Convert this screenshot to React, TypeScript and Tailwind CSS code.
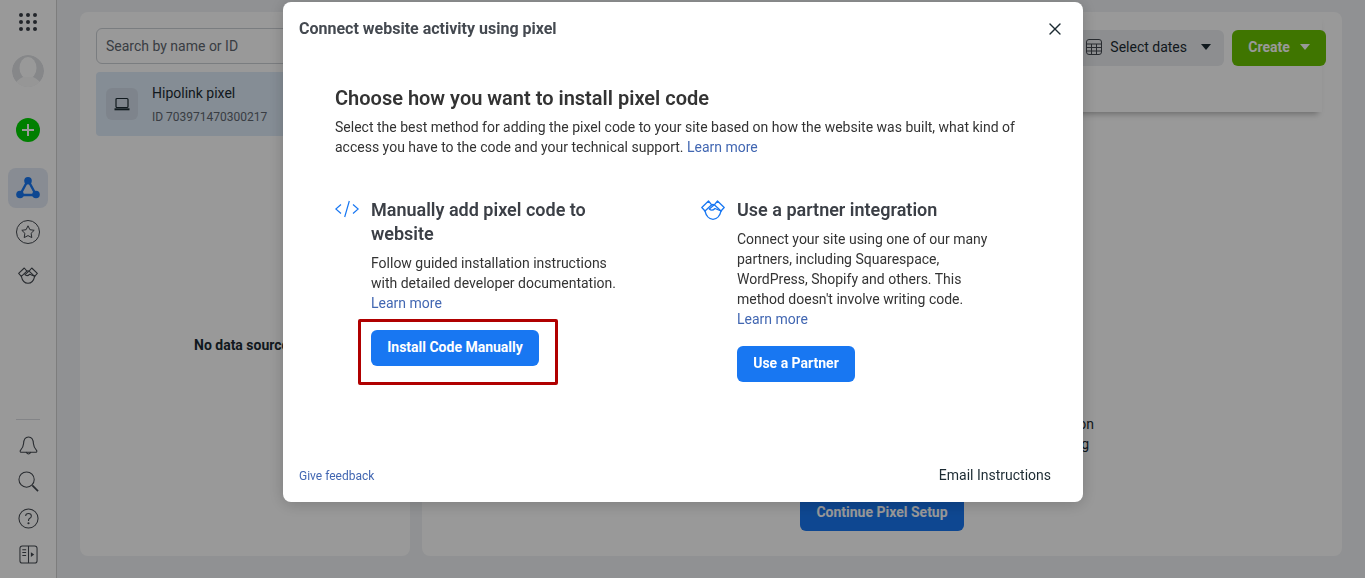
import { X } from "lucide-react";

function Handshake({ className }: { className: string }) {
    return (
        <svg viewBox="0 0 24 20" fill="none" stroke="currentColor" strokeWidth="1.3" strokeLinejoin="round" strokeLinecap="round" className={className}>
            <path d="M7.5 1 L0.8 7.5 L4 11 L10.7 4.8 Z" />
            <path d="M16.5 1 L23.2 7.5 L20 11 L13.3 4.8 Z" />
            <path d="M4 11 C5 15.5 8 19.3 12 19.3 C16 19.3 19 15.5 20 11" />
            <path d="M10.7 4.8 Q12 3.8 13.3 4.8 L8.3 9 Q11 11.5 14 8.5 L20 11" />
        </svg>
    );
}

function Sidebar() {
    return (
        <div className="w-[57px] shrink-0 bg-white border-r border-[#d0d0d0] flex flex-col items-center pt-[13px] pb-[14px] text-[#444950]">
            <div className="grid grid-cols-3 gap-[3px] w-[18px]">
                {Array.from({ length: 9 }).map((_, i) => (
                    <div key={i} className="w-1 h-1 rounded-full bg-[#3a3f47]" />
                ))}
            </div>
            <svg viewBox="0 0 32 32" className="w-8 h-8 mt-[24px] rounded-full">
                <circle cx="16" cy="16" r="16" fill="#dfe1e5" />
                <ellipse cx="16" cy="13" rx="8.5" ry="11" fill="#ffffff" />
                <path d="M2 32 Q5 24 11 22 L21 22 Q27 24 30 32 Z" fill="#fbfbfb" />
            </svg>
            <div className="w-6 h-6 mt-[31px] rounded-full bg-[#00d400] flex items-center justify-center">
                <svg viewBox="0 0 14 14" className="w-[14px] h-[14px]">
                    <path d="M7 1 V13 M1 7 H13" stroke="#fff" strokeWidth="2" />
                </svg>
            </div>
            <div className="w-10 h-10 mt-[26px] rounded-lg bg-[#e3eaf5] flex items-center justify-center">
                <svg viewBox="0 0 24 24" className="w-6 h-6" fill="#1877f2" stroke="#1877f2">
                    <path d="M12 4 L4 19 H20 Z" fill="none" strokeWidth="2.4" />
                    <circle cx="12" cy="4.8" r="3.8" stroke="none" />
                    <circle cx="4" cy="18.5" r="3.8" stroke="none" />
                    <circle cx="20" cy="18.5" r="3.8" stroke="none" />
                </svg>
            </div>
            <svg viewBox="0 0 24 24" className="w-6 h-6 mt-3" fill="none" stroke="currentColor" strokeWidth="1" strokeLinejoin="round">
                <circle cx="12" cy="12" r="11.5" />
                <path d="M12 5.8 L13.9 9.7 L18.2 10.3 L15.1 13.3 L15.8 17.6 L12 15.6 L8.2 17.6 L8.9 13.3 L5.8 10.3 L10.1 9.7 Z" />
            </svg>
            <Handshake className="w-5 h-[17px] mt-[23px]" />

            <div className="mt-auto w-6 border-t border-[#dadde1]" />
            <svg viewBox="0 0 20 22" className="w-[19px] h-[21px] mt-[15px]" fill="none" stroke="currentColor" strokeWidth="1.1" strokeLinejoin="round">
                <path d="M10 2 C6 2 5 5 4.8 9 C4.6 13 2.5 15 1.2 16.5 Q1 18 2.5 18 H17.5 Q19 18 18.8 16.5 C17.5 15 15.4 13 15.2 9 C15 5 14 2 10 2 Z" />
                <path d="M7.5 18 Q10 22 12.5 18" />
            </svg>
            <svg viewBox="0 0 22 22" className="w-[21px] h-[21px] mt-[15px]" fill="none" stroke="currentColor" strokeWidth="1.1">
                <circle cx="9" cy="9" r="8" />
                <path d="M15 15 L21 21" strokeWidth="1.8" />
            </svg>
            <svg viewBox="0 0 22 22" className="w-[21px] h-[21px] mt-[16px]" fill="none" stroke="currentColor" strokeWidth="1.1">
                <circle cx="11" cy="11" r="10" />
                <path d="M8 8.5 Q8 5.8 11 5.8 Q14 5.8 14 8.3 Q14 10 12 11 Q11 11.6 11 13.5" />
                <circle cx="11" cy="16" r="0.6" fill="currentColor" />
            </svg>
            <svg viewBox="0 0 20 20" className="w-[19px] h-[19px] mt-[16px]" fill="none" stroke="currentColor" strokeWidth="1.1">
                <rect x="1" y="1" width="18" height="18" rx="2.5" />
                <path d="M10 1 V19 M3.5 5 H7.5 M3.5 8 H7.5 M3.5 11 H7.5" />
                <path d="M12.5 7.5 L16 10 L12.5 12.5 Z" fill="currentColor" stroke="none" />
            </svg>
        </div>
    );
}

function LeftCard() {
    return (
        <div className="w-[330px] shrink-0 bg-white rounded-lg px-4 pt-4">
            <div className="h-9 border border-[#ccd0d5] rounded-md flex items-center px-[9px] text-sm text-[#606770]">Search by name or ID</div>
            <div className="h-16 mt-2 bg-[#deebf8] rounded flex items-center px-[10px]">
                <div className="w-8 h-8 rounded-md bg-[#d3dde9] flex items-center justify-center">
                    <svg viewBox="0 0 16 14" className="w-4 h-[14px]" fill="none" stroke="#1c2b33">
                        <rect x="2" y="1.5" width="12" height="9" rx="1" strokeWidth="1.2" />
                        <path d="M0.5 12.3 H15.5" strokeWidth="2" />
                    </svg>
                </div>
                <div className="ml-[14px] pb-px">
                    <div className="text-sm leading-5 text-[#1c2b33]">Hipolink pixel</div>
                    <div className="text-xs leading-4 mt-[6px] text-[#606770]">ID 703971470300217</div>
                </div>
            </div>
            <div className="mt-[199px] pl-[98px] text-sm font-bold text-[#1c2b33] whitespace-nowrap">No data sources</div>
        </div>
    );
}

function RightCard() {
    return (
        <div className="flex-1 bg-white rounded-lg flex flex-col overflow-hidden">
            <div className="h-[100px] mr-5 shadow-[0_6px_6px_-4px_rgba(0,0,0,0.3)] flex items-start justify-end gap-2 pt-[18px]">
                <div className="h-9 rounded-md bg-[#ebedf0] flex items-center pl-[14px] pr-[13px] pb-[2px] text-sm text-[#1c2b33]">
                    <svg viewBox="0 0 16 16" className="w-4 h-4 mr-2" fill="none" stroke="#444950" strokeWidth="1">
                        <rect x="0.5" y="0.5" width="15" height="15" rx="2.5" />
                        <path d="M0.5 5 H15.5 M0.5 8.5 H15.5 M0.5 12 H15.5 M5.5 5 V15.5 M10.5 5 V15.5" />
                    </svg>
                    Select dates
                    <div className="ml-[14px] w-0 h-0 border-x-[5px] border-x-transparent border-t-[6px] border-t-[#1c2b33]" />
                </div>
                <div className="h-9 w-[94px] mr-[-4px] rounded-md bg-[#69c400] flex items-center justify-center pb-[2px] text-sm font-bold text-white">
                    Create
                    <div className="ml-[10px] w-0 h-0 border-x-[5px] border-x-transparent border-t-[6px] border-t-white" />
                </div>
            </div>
            <div className="mt-auto flex flex-col items-center pb-[25px]">
                <div className="w-[424px] text-sm leading-5 text-[#1c2b33] text-right whitespace-nowrap flex flex-col items-end">
                    <div>Measure the actions people take on your website and add conversion</div>
                    <div className="pr-[5px]">events so you can improve your reporting and targeting</div>
                </div>
                <div className="mt-[41px] h-9 w-[164px] rounded-md bg-[#1877f2] text-white text-sm font-bold flex items-center justify-center pb-[2px]">Continue Pixel Setup</div>
            </div>
        </div>
    );
}

function InstallModal() {
    return (
        <div className="fixed inset-0 bg-black/40">
            <div className="absolute left-[283px] top-[2px] w-[800px] h-[500px] bg-white rounded-lg shadow-[0_2px_16px_rgba(0,0,0,0.2)] flex flex-col text-[#1c2b33]">
                <div className="flex items-center justify-between pl-4 pr-5 pt-[10px] h-[52px]">
                    <div className="text-base leading-5 font-bold text-[#444950] -mt-2">Connect website activity using pixel</div>
                    <X className="w-5 h-5 text-[#1c2b33] -mt-2 -mr-[2px]" strokeWidth={1.6} />
                </div>
                <div className="pl-[52px] pr-[60px] pt-[32px] flex-1">
                    <h2 className="text-xl leading-6 font-semibold text-[#333]">Choose how you want to install pixel code</h2>
                    <p className="text-sm leading-5 mt-[7px] text-[#333]">
                        Select the best method for adding the pixel code to your site based on how the website was built, what kind of access you have to the code and your technical support. <span className="text-[#4267b2]">Learn more</span>
                    </p>
                    <div className="flex mt-[41px]">
                        <div className="w-[366px] flex shrink-0">
                            <svg viewBox="0 0 24 18" className="w-6 h-[18px] mt-[2px] text-[#1877f2] shrink-0" fill="none" stroke="currentColor" strokeWidth="1.2">
                                <path d="M6 4.5 L0.8 9 L6 13.5 M18 4.5 L23.2 9 L18 13.5 M14.3 1 L9.7 17" />
                            </svg>
                            <div className="ml-3 w-[252px]">
                                <h3 className="text-lg leading-6 font-semibold text-[#3b3f46]">Manually add pixel code to website</h3>
                                <p className="text-sm leading-5 mt-[7px] text-[#333] whitespace-nowrap">
                                    Follow guided installation instructions<br />with detailed developer documentation.<br /><span className="text-[#4267b2]">Learn more</span>
                                </p>
                                <div className="relative mt-[17px]">
                                    <div className="h-9 w-[168px] rounded-md bg-[#1877f2] text-white text-sm font-bold flex items-center justify-center pb-[2px]">Install Code Manually</div>
                                    <div className="absolute left-[-13px] top-[-11px] w-[200px] h-[66px] border-[3px] border-[#b00000] rounded-[2px]" />
                                </div>
                            </div>
                        </div>
                        <div className="flex">
                            <Handshake className="w-6 h-5 mt-[2px] text-[#1877f2] shrink-0" />
                            <div className="ml-3 w-[262px]">
                                <h3 className="text-lg leading-6 font-semibold text-[#3b3f46]">Use a partner integration</h3>
                                <p className="text-sm leading-5 mt-[7px] text-[#333] whitespace-nowrap">
                                    Connect your site using one of our many<br />partners, including Squarespace,<br />WordPress, Shopify and others. This<br />method doesn't involve writing code.<br /><span className="text-[#4267b2]">Learn more</span>
                                </p>
                                <div className="mt-[17px] h-9 w-[118px] rounded-md bg-[#1877f2] text-white text-sm font-bold flex items-center justify-center pb-[2px]">Use a Partner</div>
                            </div>
                        </div>
                    </div>
                </div>
                <div className="flex items-center justify-between pl-4 pr-8 pb-[17px]">
                    <span className="text-xs text-[#4267b2] pt-[2px]">Give feedback</span>
                    <span className="text-sm text-[#1c2b33]">Email Instructions</span>
                </div>
            </div>
        </div>
    );
}

export default function App() {
    return (
        <div className="h-[578px] overflow-hidden flex bg-[#f0f2f5] font-['Roboto',sans-serif]">
            <Sidebar />
            <div className="flex-1 flex gap-3 pl-[23px] pr-[23px] pt-3 pb-[22px]">
                <LeftCard />
                <RightCard />
            </div>
            <InstallModal />
        </div>
    );
}
